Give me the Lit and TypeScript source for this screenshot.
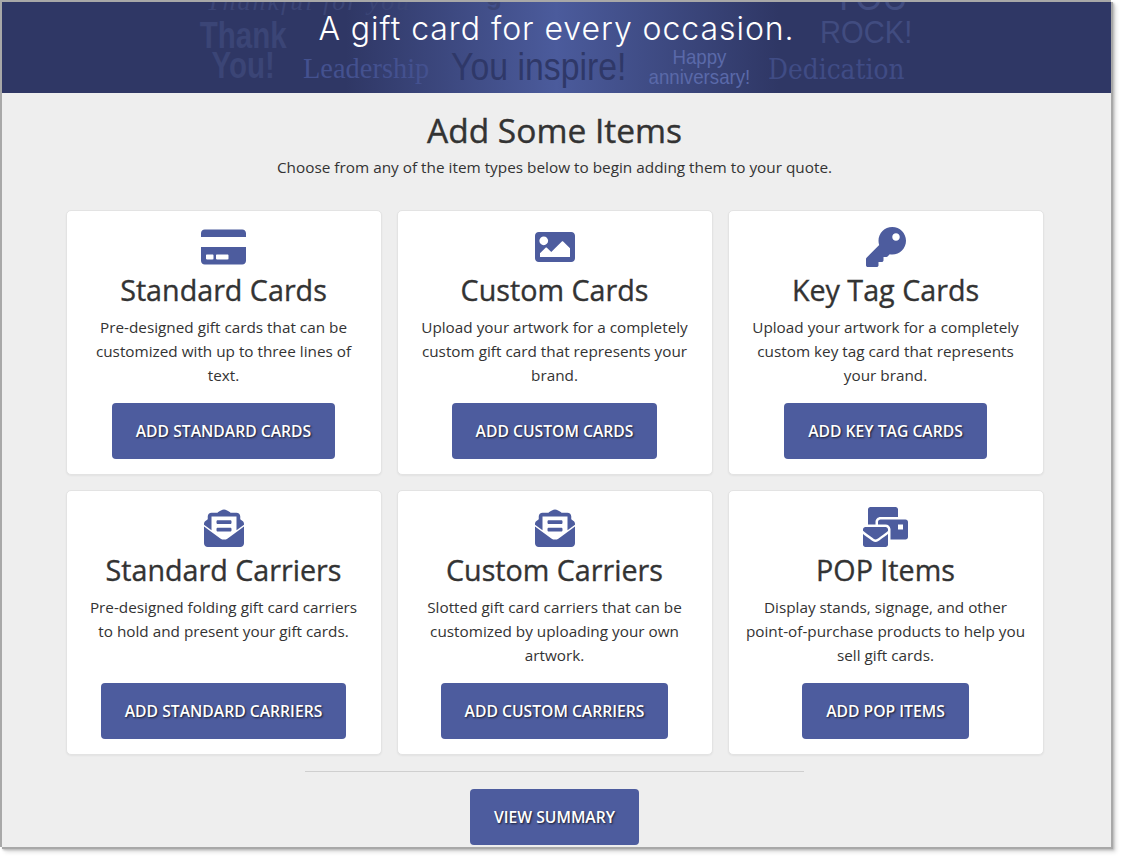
import { LitElement, html, css, svg } from "lit";
import { customElement } from "lit/decorators.js";

const ICONS: Record<string, { vb: string; d: string }> = {
  card: { vb: "0 0 576 512", d: "M0 432c0 26.5 21.5 48 48 48h480c26.5 0 48-21.5 48-48V256H0v176zm192-68c0-6.6 5.4-12 12-12h136c6.6 0 12 5.4 12 12v40c0 6.6-5.4 12-12 12H204c-6.6 0-12-5.4-12-12v-40zm-128 0c0-6.6 5.4-12 12-12h72c6.6 0 12 5.4 12 12v40c0 6.6-5.4 12-12 12H76c-6.6 0-12-5.4-12-12v-40zM576 80v48H0V80c0-26.5 21.5-48 48-48h480c26.5 0 48 21.5 48 48z" },
  image: { vb: "0 0 512 512", d: "M464 448H48c-26.51 0-48-21.49-48-48V112c0-26.51 21.49-48 48-48h416c26.51 0 48 21.49 48 48v288c0 26.51-21.49 48-48 48zM112 120c-30.928 0-56 25.072-56 56s25.072 56 56 56 56-25.072 56-56-25.072-56-56-56zM64 384h384V272l-87.515-87.515c-4.686-4.686-12.284-4.686-16.971 0L208 320l-55.515-55.515c-4.686-4.686-12.284-4.686-16.971 0L64 336v48z" },
  key: { vb: "0 0 512 512", d: "M512 176.001C512 273.203 433.202 352 336 352c-11.22 0-22.19-1.062-32.827-3.069l-24.012 27.014A23.999 23.999 0 0 1 261.223 384H224v40c0 13.255-10.745 24-24 24h-40v40c0 13.255-10.745 24-24 24H24c-13.255 0-24-10.745-24-24v-78.059c0-6.365 2.529-12.47 7.029-16.971l161.802-161.802C163.108 213.814 160 195.271 160 176 160 78.798 238.797.001 335.999 0 433.488-.001 512 78.511 512 176.001zM336 128c0 26.51 21.49 48 48 48s48-21.49 48-48-21.49-48-48-48-48 21.49-48 48z" },
  env: { vb: "0 0 512 512", d: "M176 216h160c8.84 0 16-7.16 16-16v-16c0-8.84-7.16-16-16-16H176c-8.84 0-16 7.16-16 16v16c0 8.84 7.16 16 16 16zm-16 80c0 8.84 7.16 16 16 16h160c8.84 0 16-7.16 16-16v-16c0-8.84-7.16-16-16-16H176c-8.84 0-16 7.16-16 16v16zm96 121.1c-16.4 0-32.9-5.1-46.9-15.2L0 250.9V464c0 26.5 21.5 48 48 48h416c26.5 0 48-21.5 48-48V250.9L302.9 401.9c-14 10.1-30.5 15.2-46.9 15.2zM493.7 179.5c-8.9-7-17.2-13.5-29.7-22.9V120c0-26.5-21.5-48-48-48h-77.5c-3-2.2-5.9-4.3-9-6.6C312.6 54.8 279.8 32 256 32s-56.6 22.8-73.4 33.4c-3.2 2.3-6 4.4-9 6.6H96c-26.5 0-48 21.5-48 48v36.6c-12.5 9.4-20.8 15.9-29.7 22.9C6.8 188.6 0 202.6 0 217.4v10.6l96 69.3V120h320v177.3l96-69.3v-10.6c0-14.8-6.8-28.8-18.3-37.9z" },
  bulk: { vb: "0 0 576 512", d: "M160 448c-25.6 0-51.2-22.4-64-32-64-44.8-83.2-60.8-96-70.4V480c0 17.67 14.33 32 32 32h256c17.67 0 32-14.33 32-32V345.6c-12.8 9.6-32 25.6-96 70.4-12.8 9.6-38.4 32-64 32zm128-192H32c-17.67 0-32 14.33-32 32v16c25.6 19.2 22.4 19.2 115.2 86.4 9.6 6.4 28.8 25.6 44.8 25.6s35.2-19.2 44.8-22.4c92.8-67.2 89.6-67.2 115.2-86.4V288c0-17.67-14.33-32-32-32zm256-96H224c-17.67 0-32 14.33-32 32v32h96c33.21 0 60.59 25.42 63.71 57.82l.29-.22V416h192c17.67 0 32-14.33 32-32V192c0-17.67-14.33-32-32-32zm-32 128h-64v-64h64v64zm-352-96c0-35.29 28.71-64 64-64h224V32c0-17.67-14.33-32-32-32H96C78.33 0 64 14.33 64 32v192h96v-32z" },
};

const ITEMS = [
  { icon: "card", title: "Standard Cards", text: "Pre-designed gift cards that can be customized with up to three lines of text.", btn: "ADD STANDARD CARDS" },
  { icon: "image", title: "Custom Cards", text: "Upload your artwork for a completely custom gift card that represents your brand.", btn: "ADD CUSTOM CARDS" },
  { icon: "key", title: "Key Tag Cards", text: "Upload your artwork for a completely custom key tag card that represents your brand.", btn: "ADD KEY TAG CARDS" },
  { icon: "env", title: "Standard Carriers", text: "Pre-designed folding gift card carriers to hold and present your gift cards.", btn: "ADD STANDARD CARRIERS" },
  { icon: "env", title: "Custom Carriers", text: "Slotted gift card carriers that can be customized by uploading your own artwork.", btn: "ADD CUSTOM CARRIERS" },
  { icon: "bulk", title: "POP Items", text: "Display stands, signage, and other point-of-purchase products to help you sell gift cards.", btn: "ADD POP ITEMS" },
];

@customElement("app-root")
export class AppRoot extends LitElement {
  static styles = css`
    :host { display: block; height: 860px; overflow: hidden; background: #fff; font-family: "Open Sans", "Noto Sans", sans-serif; color: #333; }
    .frame { width: 1109px; height: 845px; background: #eee; border-left: 2px solid #a8a8a8; border-top: 2px solid #a8a8a8; overflow: hidden;
      box-shadow: 2px 2px 0 #a8a8a8, 3px 3px 2px #b5b5b5, 5px 5px 4px #ddd; }
    .banner { position: relative; height: 91px; overflow: hidden; display: flex; justify-content: center;
      background: linear-gradient(90deg, #2f3765 0%, #2f3765 31%, #4b5b9c 50%, #2f3765 70%, #2f3765 100%); }
    .banner h2 { margin: 7px 0 0; font: 300 32px/40px Inter, sans-serif; letter-spacing: 0.95px; color: #fff; position: relative; white-space: nowrap; }
    .w { position: absolute; white-space: nowrap; transform-origin: 0 0; }
    .thank { left: 192px; top: 19px; font: 700 36px/30px "Liberation Sans", sans-serif; color: #3b4576; transform: scaleX(0.82); text-align: center; width: 120px; white-space: normal; }
    .lead { left: 301px; top: 51px; font: 400 29px/30px "Liberation Serif", serif; color: #44518f; transform: scaleX(0.98); }
    .insp { left: 449px; top: 45px; font: 400 38px/40px "Liberation Sans", sans-serif; color: #2f3868; transform: scaleX(0.89); }
    .happy { left: 644px; top: 45px; font: 400 21px/20px "Liberation Sans", sans-serif; color: #5a69a9; transform: scaleX(0.89); text-align: center; width: 120px; white-space: normal; }
    .ded { left: 766px; top: 53px; font: 400 28px/30px "DejaVu Serif", serif; color: #404c85; transform: scaleX(0.89); }
    .rock { left: 818px; top: 13px; font: 400 32px/34px "Liberation Sans", sans-serif; color: #414c80; transform: scaleX(0.91); }
    .you { left: 830px; top: -24px; font: 400 38px/38px "Liberation Sans", sans-serif; color: #414c80; transform: scaleX(0.92); }
    .thx { left: 204px; top: -14px; font: italic 400 26px/28px "Liberation Serif", serif; color: #3b4576; letter-spacing: 2px; }
    .g { left: 484px; top: -20px; font: 700 26px/28px "Liberation Sans", sans-serif; color: #3b4576; }
    .content { display: flex; flex-direction: column; align-items: center; width: 1105px; }
    h1 { margin: 15px 0 0; font-size: 33.5px; line-height: 44px; font-weight: 400; -webkit-text-stroke: 0.4px #333; color: #333; }
    .sub { margin: 3px 0 0; font-size: 15.33px; line-height: 24px; }
    .grid { display: grid; grid-template-columns: repeat(3, 316px); grid-auto-rows: 265px; gap: 15px; margin: 31px 0 0; }
    .card { background: #fff; border: 1px solid #e3e3e3; border-radius: 5px; padding: 16px 15px 15px; display: flex; flex-direction: column; align-items: center; text-align: center; box-sizing: border-box; box-shadow: 0 1px 2px rgba(0,0,0,.05); }
    .card svg { height: 40px; width: auto; fill: #4d5c9e; display: block; }
    .card h3 { margin: -2px 0 1px; font-size: 28.7px; line-height: 49px; font-weight: 400; -webkit-text-stroke: 0.35px #333; color: #333; white-space: nowrap; }
    .card p { margin: 0; font-size: 15.3px; line-height: 24px; height: 72px; width: 284px; }
    .btn { margin-top: auto; background: #4d5c9e; color: #fff; border: 0; border-radius: 4px; height: 56px; padding: 0 24px; font: 600 15.7px/56px "Open Sans", sans-serif; text-shadow: 1px 1px 2px rgba(0,0,0,.7); box-sizing: border-box; white-space: nowrap; }
    hr { width: 499px; height: 1px; border: 0; margin: 16px 0 17px; background: #cfcfcf; }
  `;

  icon(n: string) {
    const i = ICONS[n];
    return svg`<svg viewBox=${i.vb} aria-hidden="true"><path d=${i.d}></path></svg>`;
  }

  render() {
    return html`<div class="frame">
      <div class="banner">
        <span class="w thx">Thankful for you</span>
        <span class="w g">g</span>
        <span class="w thank">Thank You!</span>
        <span class="w lead">Leadership</span>
        <span class="w insp">You inspire!</span>
        <span class="w happy">Happy anniversary!</span>
        <span class="w ded">Dedication</span>
        <span class="w you">YOU</span>
        <span class="w rock">ROCK!</span>
        <h2>A gift card for every occasion.</h2>
      </div>
      <div class="content">
        <h1>Add Some Items</h1>
        <p class="sub">Choose from any of the item types below to begin adding them to your quote.</p>
        <div class="grid">
          ${ITEMS.map((it) => html`<div class="card">
            ${this.icon(it.icon)}
            <h3>${it.title}</h3>
            <p>${it.text}</p>
            <button class="btn">${it.btn}</button>
          </div>`)}
        </div>
        <hr />
        <button class="btn">VIEW SUMMARY</button>
      </div>
    </div>`;
  }
}
